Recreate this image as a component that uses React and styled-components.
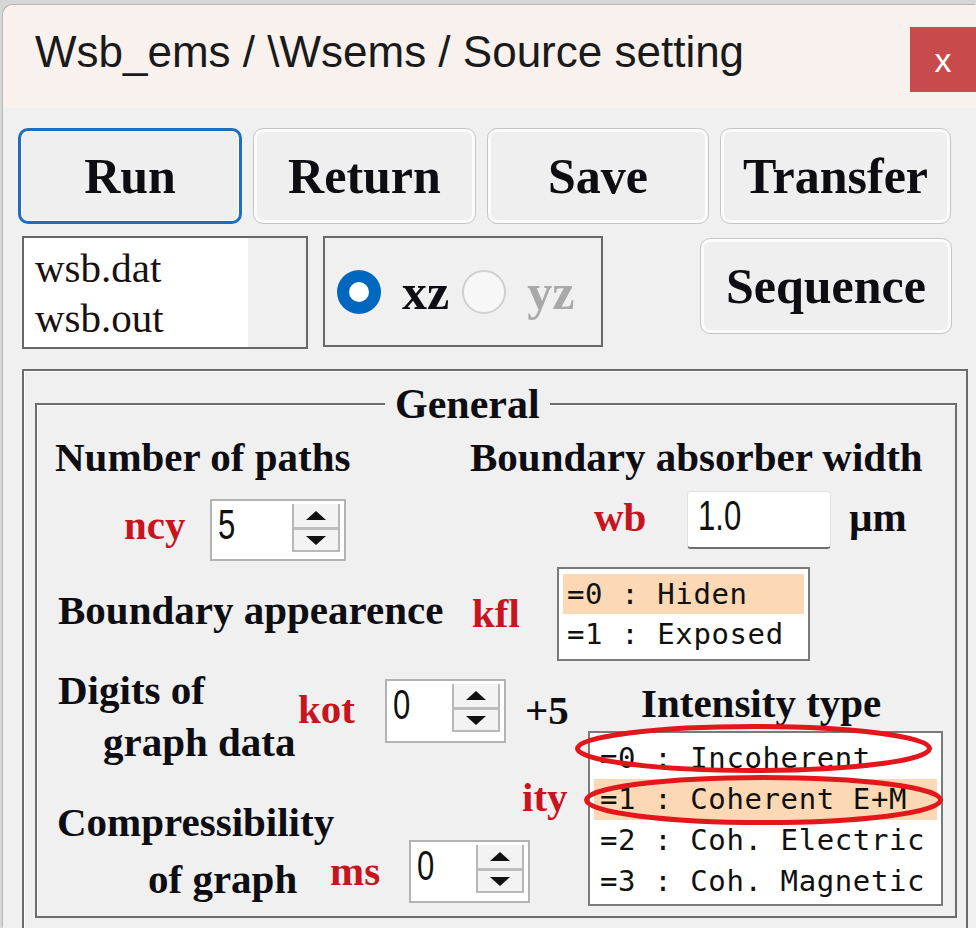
import React from 'react';
import styled, { createGlobalStyle } from 'styled-components';

const GlobalStyle = createGlobalStyle`
  html, body { margin: 0; padding: 0; overflow: hidden; }
  body { background: #d6d6d6; font-family: "Liberation Serif", serif; }
  #root { height: 928px; overflow: hidden; }
`;

const Window = styled.div`
  margin: 5px 0 0 3px;
  height: 923px;
  background: #f0f0f0;
  border-top-left-radius: 10px;
  overflow: hidden;
  box-shadow: -1px -1px 0 #b9b9b9;
  display: flex;
  flex-direction: column;
`;

const TitleBar = styled.div`
  height: 103px;
  flex: none;
  background: #f8f1ee;
  display: flex;
  justify-content: space-between;
  align-items: flex-start;
`;

const Title = styled.div`
  margin: 22px 0 0 32px;
  font: 44px/50px "Liberation Sans", Arial, sans-serif;
  color: #1a1a1a;
  white-space: nowrap;
`;

const CloseBtn = styled.div`
  margin-top: 22px;
  width: 66px;
  height: 65px;
  background: #c94a4c;
  color: #fff;
  display: flex;
  align-items: center;
  justify-content: center;
  font: 34px/1 "Liberation Sans", sans-serif;
`;

const Content = styled.div`
  padding: 20px 0 0 15px;
`;

const ButtonRow = styled.div`
  display: flex;
  gap: 11px;
`;

const Button = styled.div`
  box-sizing: border-box;
  flex: none;
  width: ${(p) => p.$w}px;
  height: 96px;
  margin: ${(p) => p.$mt || 0}px 0 0 ${(p) => p.$ml || 0}px;
  display: flex;
  align-items: center;
  justify-content: center;
  border-radius: 10px;
  background: #efefef;
  border: ${(p) => (p.$primary ? '3px solid #1b6ec2' : '1px solid #c6c6c6')};
  box-shadow: ${(p) => (p.$primary ? 'inset 0 0 0 1px #fff' : 'inset 0 0 0 3px #fbfbfb')};
  font: bold 50px/1 "Liberation Serif", serif;
  color: #0d0d12;
`;

const Row2 = styled.div`
  display: flex;
  align-items: flex-start;
  margin-top: 12px;
`;

const FileList = styled.div`
  box-sizing: border-box;
  flex: none;
  margin-left: 4px;
  width: 286px;
  height: 113px;
  border: 2px solid #686868;
  background: #fff;
  display: grid;
  grid-template-columns: 1fr 58px;
`;

const FileItems = styled.div`
  padding: 5px 0 0 11px;
  font: 41px/50px "Liberation Serif", serif;
  color: #1a1010;
`;

const FileScroll = styled.div`
  background: #f0f0f0;
`;

const RadioBox = styled.div`
  box-sizing: border-box;
  flex: none;
  margin-left: 15px;
  width: 280px;
  height: 111px;
  border: 2px solid #686868;
  display: flex;
  align-items: center;
  padding-left: 12px;
`;

const RadioDot = styled.span`
  box-sizing: border-box;
  flex: none;
  width: 44px;
  height: 44px;
  border-radius: 50%;
  margin-left: ${(p) => p.$ml || 0}px;
  background: ${(p) => (p.$checked ? '#0067c0' : '#f7f7f7')};
  border: ${(p) => (p.$checked ? 'none' : '2px solid #cfcfcf')};
  display: flex;
  align-items: center;
  justify-content: center;
  &::after {
    content: '';
    width: 20px;
    height: 20px;
    border-radius: 50%;
    background: #fff;
    display: ${(p) => (p.$checked ? 'block' : 'none')};
  }
`;

const RadioLabel = styled.span`
  margin-left: 21px;
  font: bold 50px/1 "Liberation Serif", serif;
  color: ${(p) => (p.$disabled ? '#a9a9a9' : '#0d0d12')};
`;

const OuterGroup = styled.div`
  box-sizing: border-box;
  margin: 20px 0 0 4px;
  width: 946px;
  height: 600px;
  border: 2px solid #6c6c6c;
  box-shadow: inset 1px 1px 0 #fff;
  padding: 32px 0 0 11px;
`;

const InnerGroup = styled.div`
  position: relative;
  box-sizing: border-box;
  width: 922px;
  height: 515px;
  border: 2px solid #6c6c6c;
  box-shadow: inset 1px 1px 0 #fff;
`;

const Legend = styled.div`
  position: absolute;
  left: 348px;
  top: -25px;
  padding: 0 10px;
  background: #f0f0f0;
  font: bold 42px/48px "Liberation Serif", serif;
  color: #0d0d12;
`;

const Label = styled.div`
  flex: none;
  font: bold 41px/${(p) => p.$lh || 48}px "Liberation Serif", serif;
  color: ${(p) => (p.$red ? '#c8141e' : '#0d0d12')};
  white-space: nowrap;
  width: ${(p) => (p.$w ? `${p.$w}px` : 'auto')};
  margin: ${(p) => p.$mt || 0}px 0 0 ${(p) => p.$ml || 0}px;
`;

const Indent = styled.span`
  display: block;
  padding-left: ${(p) => p.$pl}px;
`;

const Row = styled.div`
  display: flex;
  align-items: flex-start;
  margin-top: ${(p) => p.$mt || 0}px;
  padding-left: ${(p) => p.$pl || 0}px;
`;

const Col = styled.div`
  display: flex;
  flex-direction: column;
  flex: none;
  width: ${(p) => (p.$w ? `${p.$w}px` : 'auto')};
  margin: ${(p) => p.$mt || 0}px 0 0 ${(p) => p.$ml || 0}px;
`;

const SpinBoxFrame = styled.div`
  box-sizing: border-box;
  flex: none;
  width: ${(p) => p.$w}px;
  height: ${(p) => p.$h}px;
  margin-top: ${(p) => p.$mt || 0}px;
  background: #fff;
  border: 2px solid #b3b3b3;
  display: flex;
  justify-content: space-between;
  align-items: flex-start;
  padding: 3px 4px 0 6px;
`;

const NumText = styled.span`
  display: inline-block;
  font: 42px/42px "Liberation Sans", Arial, sans-serif;
  color: #111;
  transform: scaleX(0.74);
  transform-origin: left center;
`;

const Spinner = styled.div`
  box-sizing: border-box;
  flex: none;
  width: 48px;
  height: 48px;
  display: grid;
  grid-template-rows: 1fr 1fr;
  border: 2px solid #b8b8b8;
  border-top: none;
  background: #f3f3f3;
`;

const SpinHalf = styled.div`
  display: flex;
  align-items: center;
  justify-content: center;
  & + & {
    border-top: 3px solid #bdbdbd;
  }
`;

const Arrow = styled.span`
  width: 0;
  height: 0;
  border-left: 10px solid transparent;
  border-right: 10px solid transparent;
  ${(p) => (p.$up ? 'border-bottom: 9px solid #111;' : 'border-top: 9px solid #111;')}
`;

const TextField = styled.div`
  box-sizing: border-box;
  flex: none;
  width: 144px;
  height: 58px;
  background: #fff;
  border: 1px solid #e3e3e3;
  border-bottom: 2px solid #6e6e6e;
  border-radius: 4px;
  padding: 3px 0 0 10px;
`;

const ListBox = styled.div`
  position: relative;
  box-sizing: border-box;
  flex: none;
  width: ${(p) => p.$w}px;
  height: ${(p) => p.$h}px;
  background: #fff;
  border: 2px solid #7a7a7a;
  padding: 5px 4px;
`;

const ListItem = styled.div`
  height: ${(p) => p.$h}px;
  padding-left: ${(p) => p.$pl}px;
  background: ${(p) => (p.$sel ? '#fdd8b4' : 'transparent')};
  font: 29px/${(p) => p.$h}px "DejaVu Sans Mono", monospace;
  letter-spacing: 0.6px;
  color: #111;
  white-space: nowrap;
`;

const Annot = styled.svg`
  position: absolute;
  left: -22px;
  top: -17px;
  overflow: visible;
  pointer-events: none;
`;

function SpinBox({ w, h, mt, value }) {
  return (
    <SpinBoxFrame $w={w} $h={h} $mt={mt}>
      <NumText>{value}</NumText>
      <Spinner>
        <SpinHalf>
          <Arrow $up />
        </SpinHalf>
        <SpinHalf>
          <Arrow />
        </SpinHalf>
      </Spinner>
    </SpinBoxFrame>
  );
}

export default function App() {
  return (
    <>
      <GlobalStyle />
      <Window>
        <TitleBar>
          <Title>Wsb_ems / \Wsems / Source setting</Title>
          <CloseBtn>x</CloseBtn>
        </TitleBar>
        <Content>
          <ButtonRow>
            <Button $w={224} $primary>Run</Button>
            <Button $w={223}>Return</Button>
            <Button $w={222}>Save</Button>
            <Button $w={231}>Transfer</Button>
          </ButtonRow>
          <Row2>
            <FileList>
              <FileItems>
                <div>wsb.dat</div>
                <div>wsb.out</div>
              </FileItems>
              <FileScroll />
            </FileList>
            <RadioBox>
              <RadioDot $checked />
              <RadioLabel>xz</RadioLabel>
              <RadioDot $ml={13} />
              <RadioLabel $disabled>yz</RadioLabel>
            </RadioBox>
            <Button $w={252} $ml={97} $mt={2}>Sequence</Button>
          </Row2>
          <OuterGroup>
            <InnerGroup>
              <Legend>General</Legend>
              <Row $mt={28}>
                <Col $ml={18} $w={415}>
                  <Label>Number of paths</Label>
                  <Row $mt={18} $pl={69}>
                    <Label $red $w={86} $mt={2}>ncy</Label>
                    <SpinBox w={136} h={62} value="5" />
                  </Row>
                </Col>
                <Col>
                  <Label>Boundary absorber width</Label>
                  <Row $mt={10} $pl={124}>
                    <Label $red $w={93} $mt={2}>wb</Label>
                    <TextField>
                      <NumText>1.0</NumText>
                    </TextField>
                    <Label $ml={18} $mt={2}>µm</Label>
                  </Row>
                </Col>
              </Row>
              <Row $mt={6}>
                <Label $ml={21} $w={414} $mt={19}>Boundary appearence</Label>
                <Label $red $w={85} $mt={22}>kfl</Label>
                <ListBox $w={253} $h={94}>
                  <ListItem $h={40} $pl={4} $sel>=0 : Hiden</ListItem>
                  <ListItem $h={40} $pl={4}>=1 : Exposed</ListItem>
                </ListBox>
              </Row>
              <Row $mt={3}>
                <Col $w={485}>
                  <Row>
                    <Label $lh={52} $ml={21} $w={240}>
                      Digits of
                      <Indent $pl={45}>graph data</Indent>
                    </Label>
                    <Label $red $w={87} $mt={21}>kot</Label>
                    <SpinBox w={121} h={64} mt={15} value="0" />
                    <Label $ml={19} $mt={22}>+5</Label>
                  </Row>
                  <Row $mt={26}>
                    <Label $lh={57} $ml={20} $w={273}>
                      Compressibility
                      <Indent $pl={91}>of graph</Indent>
                    </Label>
                    <Label $red $w={79} $mt={53}>ms</Label>
                    <SpinBox w={121} h={63} mt={46} value="0" />
                  </Row>
                </Col>
                <Col $mt={15}>
                  <Label $ml={119}>Intensity type</Label>
                  <Row $mt={4}>
                    <Label $red $w={66} $mt={42}>ity</Label>
                    <ListBox $w={355} $h={175}>
                      <ListItem $h={41} $pl={6}>=0 : Incoherent</ListItem>
                      <ListItem $h={41} $pl={6} $sel>=1 : Coherent E+M</ListItem>
                      <ListItem $h={41} $pl={6}>=2 : Coh. Electric</ListItem>
                      <ListItem $h={41} $pl={6}>=3 : Coh. Magnetic</ListItem>
                      <Annot width="400" height="120" viewBox="0 0 400 120">
                        <ellipse cx="185.5" cy="32.5" rx="176" ry="22" fill="none" stroke="#e2161b" strokeWidth="5" />
                        <ellipse cx="195.5" cy="84" rx="177" ry="22.5" fill="none" stroke="#e2161b" strokeWidth="5" />
                      </Annot>
                    </ListBox>
                  </Row>
                </Col>
              </Row>
            </InnerGroup>
          </OuterGroup>
        </Content>
      </Window>
    </>
  );
}
